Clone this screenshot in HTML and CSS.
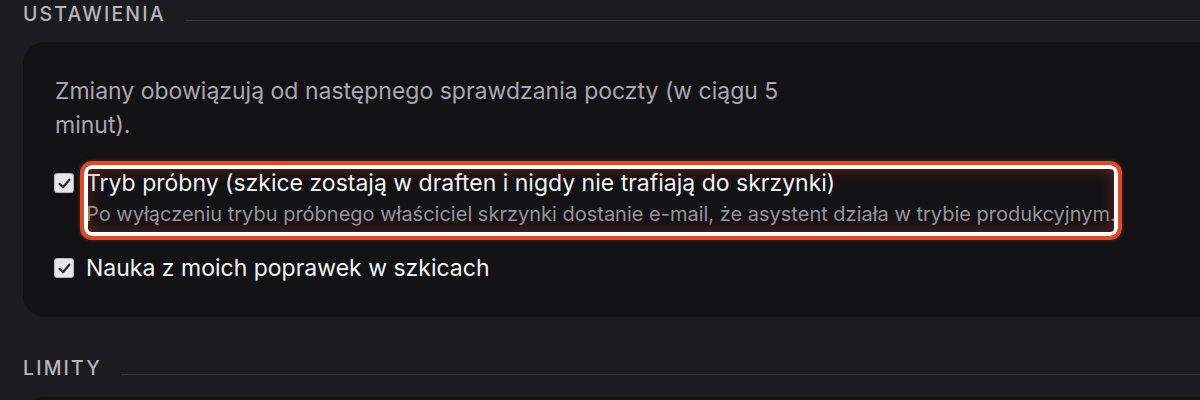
FILE: index.html
```html
<!DOCTYPE html>
<html lang="pl">
<head>
<meta charset="utf-8">
<title>Ustawienia</title>
<link rel="stylesheet" href="styles.css">
</head>
<body>
<main class="page">
  <section class="section">
    <header class="section-head">
      <h2 class="section-title">USTAWIENIA</h2>
      <span class="section-rule"></span>
    </header>
    <div class="card">
      <p class="note">Zmiany obowiązują od następnego sprawdzania poczty (w ciągu 5 minut).</p>
      <div class="option">
        <span class="check" aria-hidden="true">
          <svg viewBox="0 0 20 20" width="15" height="15"><path d="M3.5 10.5 L8 15 L16.5 5" fill="none" stroke="#2a2a2d" stroke-width="3" stroke-linecap="round" stroke-linejoin="round"/></svg>
        </span>
        <div class="option-text">
          <div class="option-label">Tryb próbny (szkice zostają w draften i nigdy nie trafiają do skrzynki)</div>
          <div class="option-help">Po wyłączeniu trybu próbnego właściciel skrzynki dostanie e-mail, że asystent działa w trybie produkcyjnym.</div>
          <span class="highlight"></span>
        </div>
      </div>
      <div class="option">
        <span class="check" aria-hidden="true">
          <svg viewBox="0 0 20 20" width="15" height="15"><path d="M3.5 10.5 L8 15 L16.5 5" fill="none" stroke="#2a2a2d" stroke-width="3" stroke-linecap="round" stroke-linejoin="round"/></svg>
        </span>
        <div class="option-text">
          <div class="option-label">Nauka z moich poprawek w szkicach</div>
        </div>
      </div>
    </div>
  </section>
  <section class="section">
    <header class="section-head">
      <h2 class="section-title">LIMITY</h2>
      <span class="section-rule"></span>
    </header>
    <div class="card card-short"></div>
  </section>
</main>
</body>
</html>
```

FILE: styles.css
```css
html, body {
  margin: 0;
  padding: 0;
  background: #1c1b1f;
  overflow: hidden;
}

body {
  font-family: Inter, "Noto Sans", sans-serif;
  color: #e9e9ec;
}

.page {
  width: 1240px;
  padding: 0 0 0 23px;
  box-sizing: border-box;
}

.section-head {
  display: flex;
  align-items: center;
  gap: 19px;
  height: 28px;
}

.section-title {
  margin: 0;
  font-size: 19.5px;
  font-weight: 500;
  letter-spacing: 0.11em;
  color: #b6b5bb;
  line-height: 28px;
}

.section-rule {
  flex: 1;
  height: 1px;
  background: #3b3a3f;
  margin-top: 12px;
}

.card {
  margin-top: 14px;
  background: #131215;
  border-radius: 22px;
  padding: 32px;
  margin-bottom: 37px;
}

.card-short {
  height: 40px;
  margin-top: 15px;
}

.note {
  margin: 0 0 24px;
  max-width: 745px;
  font-size: 23px;
  line-height: 34px;
  color: #a9a8ae;
}

.option {
  display: flex;
  align-items: flex-start;
  gap: 12px;
  margin-bottom: 23px;
}

.option:last-child {
  margin-bottom: 0;
}

.check {
  flex: none;
  width: 20px;
  height: 20px;
  margin-top: 7px;
  margin-left: -1px;
  border-radius: 3px;
  background: #e6e6e8;
  border: 1px solid #b9b9bc;
  box-sizing: border-box;
  display: flex;
  align-items: center;
  justify-content: center;
}

.option-text {
  position: relative;
}

.option-label {
  font-size: 23px;
  line-height: 34px;
  color: #f5f5f7;
}

.option-help {
  font-size: 20px;
  line-height: 28px;
  color: #96959b;
  white-space: nowrap;
}

.highlight {
  position: absolute;
  left: -6px;
  top: -5px;
  width: 1042px;
  height: 79px;
  box-sizing: border-box;
  border: 4px solid #dc4a2c;
  border-radius: 12px;
  box-shadow:
    inset 0 0 0 4px #ffffff,
    inset 0 0 14px 5px rgba(190, 60, 35, 0.45),
    0 0 4px rgba(220, 74, 44, 0.4);
  pointer-events: none;
}
```
